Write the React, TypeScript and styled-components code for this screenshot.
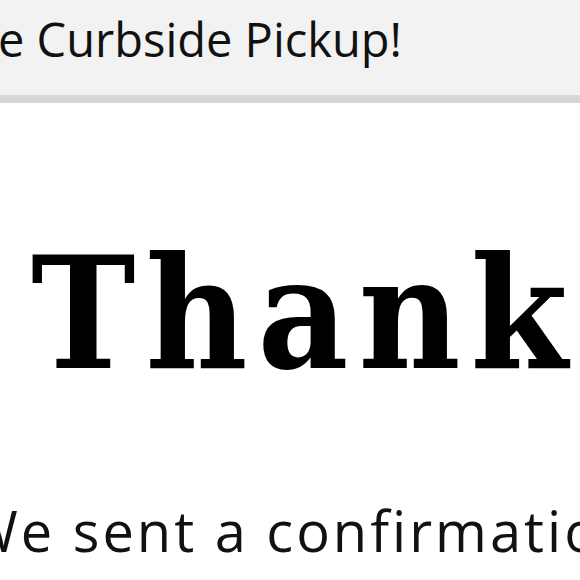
import * as React from 'react'

import styled, { createGlobalStyle } from 'styled-components'

const GlobalStyle = createGlobalStyle`
  html,
  body {
    margin: 0;
    padding: 0;
    background: #fff;
    overflow: hidden;
  }
`

const App: React.FC = () => (
  <Page>
    <GlobalStyle />
    <Banner>
      <BannerText>e Curbside Pickup!</BannerText>
    </Banner>
    <Content>
      <Title>Thank</Title>
      <Message>We sent a confirmation</Message>
    </Content>
  </Page>
)

export default App

const Page = styled.div`
  width: 580px;
  height: 580px;
  overflow: hidden;
  display: flex;
  flex-direction: column;
`

const Banner = styled.div`
  height: 95px;
  background-color: #f2f2f2;
  border-bottom: 8px solid #d6d6d6;
  display: flex;
  align-items: center;
`

const BannerText = styled.div`
  font-family: 'Open Sans', sans-serif;
  font-size: 47px;
  color: #111;
  white-space: nowrap;
  margin: -18px 0 0 -2px;
`

const Content = styled.div`
  display: flex;
  flex-direction: column;
`

const Title = styled.h1`
  margin: 133px 0 0 31px;
  font-family: 'DejaVu Serif Condensed', 'DejaVu Serif', serif;
  font-stretch: condensed;
  font-weight: bold;
  font-size: 156px;
  letter-spacing: 10px;
  line-height: 1;
  color: #000;
  white-space: nowrap;
`

const Message = styled.p`
  margin: 110px 0 0 -34px;
  font-family: 'Open Sans', sans-serif;
  font-size: 56px;
  letter-spacing: 3px;
  line-height: 1;
  color: #111;
  white-space: nowrap;
`
